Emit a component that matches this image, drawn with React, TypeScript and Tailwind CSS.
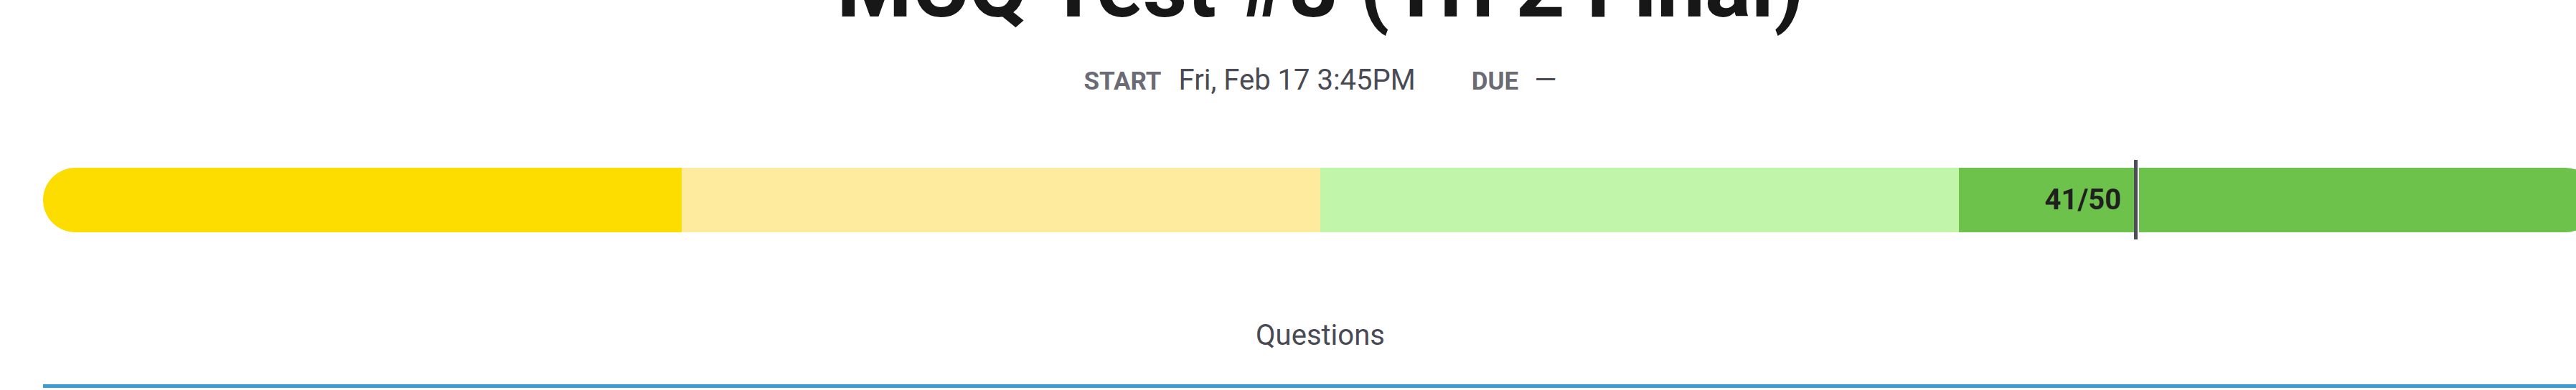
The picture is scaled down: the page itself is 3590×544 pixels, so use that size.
export default function App() {
  return (
    <div className="w-full h-[544px] overflow-hidden bg-white font-['Roboto',sans-serif]">
      <div className="w-[3680px] px-[60px]">
        {/* Titel, delvis utscrollad */}
        <h1 className="-mt-[78px] text-center text-[120px] leading-none font-bold text-[#171717]">
          MCQ Test #8 (Tri 2 Final)
        </h1>

        {/* Start / due */}
        <div className="mt-[50px] flex items-baseline justify-center leading-[40px]">
          <span className="text-[35px] font-bold text-[#6b6b75]">START</span>
          <span className="ml-[24px] text-[40px] text-[#4a4a55]">Fri, Feb 17 3:45PM</span>
          <span className="ml-[78px] text-[35px] font-bold text-[#6b6b75]">DUE</span>
          <span className="ml-[22px] text-[40px] text-[#4a4a55]">—</span>
        </div>

        {/* Betygsskala */}
        <div className="relative mt-[100px] h-[90px]">
          <div className="flex h-full overflow-hidden rounded-full">
            <div className="flex-1 bg-[#fddc00]" />
            <div className="flex-1 bg-[#feeb9e]" />
            <div className="flex-1 bg-[#c0f5aa]" />
            <div className="flex-1 bg-[#6cc24a]" />
          </div>
          <div className="absolute inset-y-0 right-[calc(18%+23px)] flex items-center text-[40px] font-bold text-[#1f1f1f]">
            41/50
          </div>
          <div className="absolute -top-[11px] -bottom-[10px] left-[calc(82%-5px)] w-[7px] bg-[#4d4d57] border-r-2 border-white" />
        </div>

        {/* Flikar */}
        <div className="mt-[124px]">
          <div className="pb-[48px] text-center text-[40px] leading-[40px] text-[#4a4a55]">Questions</div>
          <div className="h-[5px] bg-[#3d9ad6]" />
        </div>
      </div>
    </div>
  );
}
